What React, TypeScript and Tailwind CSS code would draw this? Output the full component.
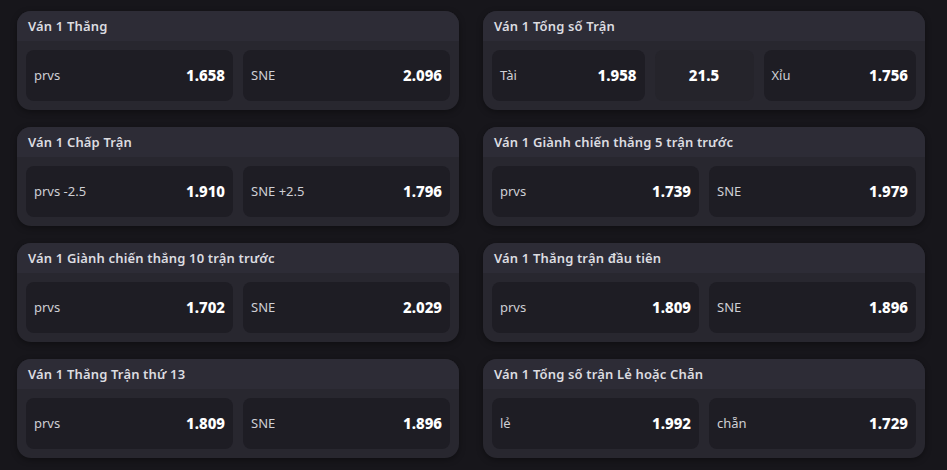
type Cell = { label?: string; value: string };
type Market = { title: string; cells: Cell[] };

const left: Market[] = [
  { title: 'Ván 1 Thắng', cells: [{ label: 'prvs', value: '1.658' }, { label: 'SNE', value: '2.096' }] },
  { title: 'Ván 1 Chấp Trận', cells: [{ label: 'prvs -2.5', value: '1.910' }, { label: 'SNE +2.5', value: '1.796' }] },
  { title: 'Ván 1 Giành chiến thắng 10 trận trước', cells: [{ label: 'prvs', value: '1.702' }, { label: 'SNE', value: '2.029' }] },
  { title: 'Ván 1 Thắng Trận thứ 13', cells: [{ label: 'prvs', value: '1.809' }, { label: 'SNE', value: '1.896' }] },
];

const right: Market[] = [
  { title: 'Ván 1 Tổng số Trận', cells: [{ label: 'Tài', value: '1.958' }, { value: '21.5' }, { label: 'Xỉu', value: '1.756' }] },
  { title: 'Ván 1 Giành chiến thắng 5 trận trước', cells: [{ label: 'prvs', value: '1.739' }, { label: 'SNE', value: '1.979' }] },
  { title: 'Ván 1 Thắng trận đầu tiên', cells: [{ label: 'prvs', value: '1.809' }, { label: 'SNE', value: '1.896' }] },
  { title: 'Ván 1 Tổng số trận Lẻ hoặc Chẵn', cells: [{ label: 'lẻ', value: '1.992' }, { label: 'chẵn', value: '1.729' }] },
];

function MarketCard({ market }: { market: Market }) {
  return (
    <div className="h-[99px] rounded-[14px] bg-[#28272f] overflow-hidden flex flex-col shadow-[0_2px_6px_rgba(0,0,0,0.35)]">
      <div className="h-[30px] shrink-0 bg-[#2d2c36] flex items-center px-[11px] pt-[2px] text-[13px] font-semibold text-[#dcdce0] tracking-[0.15px]">
        {market.title}
      </div>
      <div className="flex gap-[10px] px-[9px] pt-[9px]">
        {market.cells.map((c, i) =>
          c.label ? (
            <div
              key={i}
              className="flex-1 h-[51px] rounded-[8px] bg-[#1e1d24] flex items-center justify-between px-[8px]"
            >
              <span className="text-[13px] text-[#cfcfd4]">{c.label}</span>
              <span className="text-[15px] font-extrabold text-white">{c.value}</span>
            </div>
          ) : (
            <div
              key={i}
              className="w-[99px] shrink-0 h-[51px] rounded-[8px] bg-[#25242b] flex items-center justify-center"
            >
              <span className="text-[15px] font-extrabold text-white">{c.value}</span>
            </div>
          )
        )}
      </div>
    </div>
  );
}

export default function App() {
  return (
    <div
      className="w-[947px] h-[470px] bg-[#17161b] px-[17px] pt-[11px] grid grid-cols-[442px_442px] gap-x-[24px] content-start"
      style={{ fontFamily: '"Noto Sans", "Open Sans", sans-serif' }}
    >
      <div className="flex flex-col gap-[17px]">
        {left.map((m) => (
          <MarketCard key={m.title} market={m} />
        ))}
      </div>
      <div className="flex flex-col gap-[17px]">
        {right.map((m) => (
          <MarketCard key={m.title} market={m} />
        ))}
      </div>
    </div>
  );
}
